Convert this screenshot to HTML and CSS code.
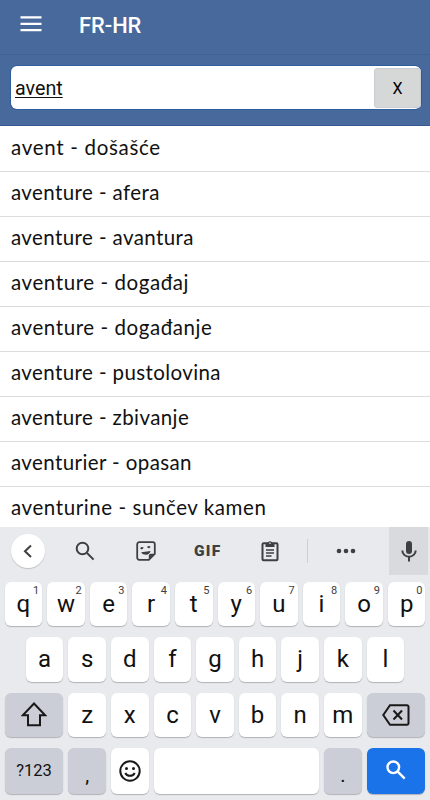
FILE: index.html
```html
<!DOCTYPE html>
<html lang="hr">
<head>
    <meta charset="UTF-8">
    <meta name="viewport" content="width=device-width, initial-scale=1.0">
    <title>FR-HR</title>
    <link rel="stylesheet" href="styles.css">
</head>
<body>
    <header class="app-bar">
        <svg class="menu-icon" width="22" height="16" viewBox="0 0 22 16"><path d="M.5 1.3h21M.5 7.8h21M.5 14.2h21"/></svg>
        <h1>FR-HR</h1>
    </header>

    <div class="search-bar">
        <form class="search-box">
            <span class="search-text">avent</span>
            <button type="button" class="clear">X</button>
        </form>
    </div>

    <ul class="results">
        <li class="looser">avent - došašće</li>
        <li>aventure - afera</li>
        <li>aventure - avantura</li>
        <li class="loose">aventure - događaj</li>
        <li class="loose">aventure - događanje</li>
        <li>aventure - pustolovina</li>
        <li>aventure - zbivanje</li>
        <li>aventurier - opasan</li>
        <li class="loose">aventurine - sunčev kamen</li>
    </ul>

    <div class="keyboard">
        <div class="toolbar">
            <div class="tool back">
                <svg width="34" height="34" viewBox="0 0 34 34"><path d="M20 11.5l-6 5.7 6 5.7"/></svg>
            </div>
            <div class="tool find">
                <svg width="20" height="20" viewBox="0 0 20 20"><circle cx="7.5" cy="7.5" r="5.8"/><path d="M12 12l6.6 6.6"/></svg>
            </div>
            <div class="tool sticker">
                <svg width="20" height="20" viewBox="0 0 20 20"><path d="M3.2 1.2h13.6a2 2 0 0 1 2 2v9.6l-6 6H3.2a2 2 0 0 1-2-2V3.2a2 2 0 0 1 2-2z"/><path class="solid" d="M18.8 12.8h-4a2 2 0 0 0-2 2v4z"/><path class="solid" d="M5.2 11.3l9.4-1.3c-.6 2.400-2.300 3.800-4.400 3.800-2.300 0-4.200-.7-5-2.500z"/><path d="M4.800 7.800q1-1.200 2.400-.5M11.600 6.500q1.300-1 2.400 0"/></svg>
            </div>
            <div class="tool gif">GIF</div>
            <div class="tool clipboard">
                <svg width="18" height="22" viewBox="0 0 18 22"><path d="M2.500 3.300h13a1 1 0 0 1 1 1v14.900a1 1 0 0 1-1 1h-13a1 1 0 0 1-1-1V4.300a1 1 0 0 1 1-1z"/><path class="solid" d="M4.500 3h2.200a2.400 2.400 0 0 1 4.600 0h2.200v4h-9z"/><circle class="hole" cx="9" cy="3.200" r=".8"/><path class="lines" d="M5 10h8M5 13h8M5 16h5.500"/></svg>
            </div>
            <div class="divider"></div>
            <div class="tool more">
                <svg width="20" height="6" viewBox="0 0 20 6"><circle cx="3" cy="3" r="2.300"/><circle cx="10" cy="3" r="2.300"/><circle cx="17" cy="3" r="2.300"/></svg>
            </div>
            <div class="tool mic">
                <svg width="16" height="22" viewBox="0 0 16 22"><rect class="solid" x="5" y="1" width="6" height="13" rx="3"/><path d="M1.300 10.500a6.700 6.200 0 0 0 13.400 0M8 17v4.500"/></svg>
            </div>
        </div>

        <div class="keys">
            <div class="row">
                <div class="key">q<sup>1</sup></div>
                <div class="key">w<sup>2</sup></div>
                <div class="key">e<sup>3</sup></div>
                <div class="key">r<sup>4</sup></div>
                <div class="key">t<sup>5</sup></div>
                <div class="key">y<sup>6</sup></div>
                <div class="key">u<sup>7</sup></div>
                <div class="key">i<sup>8</sup></div>
                <div class="key">o<sup>9</sup></div>
                <div class="key">p<sup>0</sup></div>
            </div>
            <div class="row">
                <div class="key">a</div>
                <div class="key">s</div>
                <div class="key">d</div>
                <div class="key">f</div>
                <div class="key">g</div>
                <div class="key">h</div>
                <div class="key">j</div>
                <div class="key">k</div>
                <div class="key">l</div>
            </div>
            <div class="row">
                <div class="key wide gray">
                    <svg width="26" height="25" viewBox="0 0 26 25"><path d="M13 1.500L1.800 13.300H7v10h12v-10h5.200z"/></svg>
                </div>
                <div class="key">z</div>
                <div class="key">x</div>
                <div class="key">c</div>
                <div class="key">v</div>
                <div class="key">b</div>
                <div class="key">n</div>
                <div class="key">m</div>
                <div class="key wide gray">
                    <svg width="28" height="22" viewBox="0 0 28 22"><path d="M8 1.200h17a1.500 1.500 0 0 1 1.500 1.500v16.600a1.500 1.500 0 0 1-1.500 1.500H8L1.300 11zM11.500 6.500l8.500 9M20 6.500l-8.500 9"/></svg>
                </div>
            </div>
            <div class="row last">
                <div class="key wide gray symbols">?123</div>
                <div class="key gray punct">,</div>
                <div class="key">
                    <svg width="22" height="22" viewBox="0 0 22 22"><circle cx="11" cy="11" r="9.700"/><path d="M6.300 13c1.800 3.800 7.600 3.800 9.400 0"/><circle class="solid" cx="7.500" cy="8.500" r="1.500"/><circle class="solid" cx="14.500" cy="8.500" r="1.500"/></svg>
                </div>
                <div class="key space"></div>
                <div class="key gray punct">.</div>
                <div class="key wide enter">
                    <svg width="20" height="20" viewBox="0 0 20 20"><circle cx="7.300" cy="7.300" r="5.800"/><path d="M11.700 11.700l7 7"/></svg>
                </div>
            </div>
        </div>
    </div>
</body>
</html>
```
FILE: styles.css
```css
* {
  box-sizing: border-box;
}

body {
  margin: 0;
  width: 430px;
  height: 800px;
  overflow: hidden;
  background-color: #fff;
  font-family: Roboto, sans-serif;
  color: #111;
}

svg {
  display: block;
  fill: none;
  stroke: #3c4043;
  stroke-width: 2;
}

.app-bar {
  display: flex;
  height: 55px;
  padding: 15px 0 0 20px;
  background-color: #48699c;
  border-bottom: 1px solid #426292;
}

.menu-icon {
  margin-top: 1px;
  stroke: #fff;
  stroke-width: 2.3;
}

.app-bar h1 {
  margin: -2px 0 0 37px;
  font-size: 21.8px;
  font-weight: 500;
  line-height: 26px;
  color: #fff;
}

.search-bar {
  height: 71px;
  padding: 11px 9px 0 11px;
  background-color: #48699c;
  border-bottom: 1px solid #345a91;
}

.search-box {
  display: flex;
  align-items: center;
  justify-content: space-between;
  height: 43px;
  padding-left: 4px;
  background-color: #fff;
  border-radius: 6px;
  box-shadow: 0 0 0 1px #315d9c;
}

.search-text {
  padding-top: 2px;
  font-size: 19.7px;
  text-decoration: underline;
  text-decoration-thickness: 1px;
  text-underline-offset: 2px;
}

.clear {
  width: 47px;
  height: 40px;
  padding: 2px 0 0;
  border: 1px solid #cbcdd2;
  border-radius: 3px;
  background-color: #d6d8d8;
  font-family: Roboto, sans-serif;
  font-size: 16px;
  color: #000;
}

.results {
  height: 401px;
  margin: 0;
  padding: 1px 0 0;
  overflow: hidden;
  list-style: none;
}

.results li {
  height: 45px;
  padding-left: 11px;
  border-bottom: 1px solid #dcdcdc;
  font-family: Lato, sans-serif;
  font-size: 20.5px;
  line-height: 41px;
  letter-spacing: 0.4px;
  white-space: nowrap;
}

.results .loose {
  letter-spacing: 0.58px;
}

.results .looser {
  letter-spacing: 0.7px;
}

.keyboard {
  height: 273px;
  background-color: #e8eaed;
}

.toolbar {
  display: flex;
  align-items: center;
  height: 48px;
  padding: 0 2px 0 11px;
}

.tool .solid {
  fill: #3c4043;
  stroke: none;
}

.back {
  width: 34px;
  height: 34px;
  border-radius: 50%;
  background-color: #fff;
  box-shadow: 0 1px 1px #bfc1c5;
}

.find {
  margin-left: 30px;
}

.sticker {
  margin-left: 41px;
}

.sticker svg {
  stroke-width: 1.8;
}

.gif {
  width: 28px;
  margin-left: 38px;
  font-size: 15.5px;
  font-weight: 900;
  letter-spacing: 1.2px;
  color: #3c4043;
}

.clipboard {
  margin-left: 39px;
}

.clipboard .hole {
  fill: #e8eaed;
  stroke: none;
}

.clipboard .lines {
  stroke-width: 1.5;
}

.divider {
  width: 1px;
  height: 24px;
  margin-left: 28px;
  background-color: #cdcfd4;
}

.more {
  margin-left: 28px;
}

.more circle {
  fill: #3c4043;
  stroke: none;
}

.mic {
  display: flex;
  align-items: center;
  justify-content: center;
  width: 39px;
  height: 48px;
  margin-left: auto;
  background-color: #d8dadd;
}

.keys {
  display: flex;
  flex-direction: column;
  gap: 11px;
  padding: 7px 4.5px 0;
}

.row {
  display: flex;
  justify-content: center;
  gap: 5px;
  height: 44.3px;
}

.row.last {
  height: 46px;
}

.key {
  position: relative;
  display: flex;
  align-items: center;
  justify-content: center;
  width: 37.6px;
  border-radius: 6px;
  background-color: #fff;
  box-shadow: 0 1px 1px #b0b2b6;
  font-size: 24px;
  color: #111;
}

.key svg {
  stroke: #191919;
}

.key .solid {
  fill: #191919;
  stroke: none;
}

.key sup {
  position: absolute;
  top: 2px;
  right: 3px;
  font-size: 11px;
  line-height: 13px;
  color: #3c4043;
}

.wide {
  width: 58.9px;
}

.gray {
  background-color: #cbced6;
}

.symbols {
  font-size: 16.5px;
}

.punct {
  padding-top: 8px;
  font-size: 20px;
}

.space {
  width: 165.4px;
}

.enter {
  background-color: #1a73e8;
}

.enter svg {
  margin-top: -2px;
  stroke: #fff;
  stroke-width: 2.4;
}
```
